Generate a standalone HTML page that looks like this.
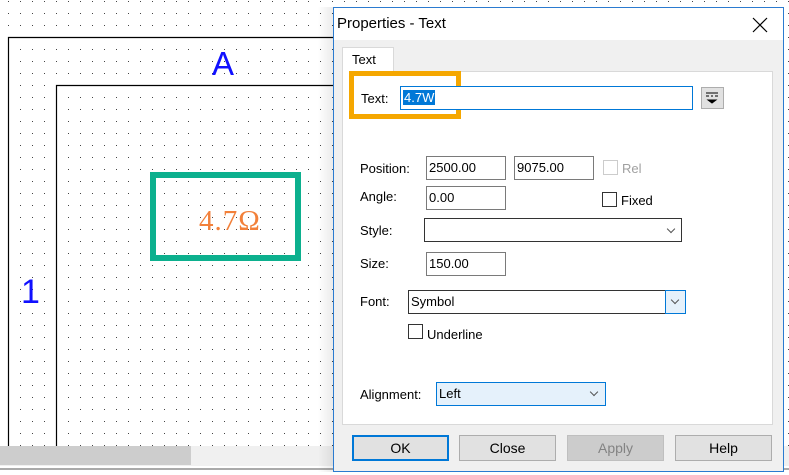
<!DOCTYPE html>
<html><head><style>
*{margin:0;padding:0;box-sizing:border-box}
body{width:789px;height:475px;position:relative;overflow:hidden;background:#fff;font-family:"Liberation Sans",sans-serif;font-size:13px;color:#000}
.a{position:absolute}
.inp{position:absolute;background:#fff;border:1px solid #7a7a7a;padding:3px 2px;font-size:13px;line-height:15px}
.lbl{position:absolute;font-size:13px}
.cb{position:absolute;width:15px;height:15px;border:1px solid #333;background:#fff}
.btn{position:absolute;top:435px;height:26px;width:97px;border:1px solid #adadad;background:#e1e1e1;text-align:center;line-height:24px;font-size:14px}
.chev{position:absolute;width:6px;height:6px;border-right:1px solid #555;border-bottom:1px solid #555;transform:rotate(45deg)}
</style></head><body>
<svg class="a" style="left:0;top:0" width="789" height="475">
<defs><pattern id="p" width="12" height="12" patternUnits="userSpaceOnUse"><rect x="8" y="1" width="1" height="1" fill="#444"/></pattern></defs>
<rect width="789" height="446" fill="url(#p)"/>
<path d="M8.5 446V37.5H340M56.5 446V85.5H340" stroke="#000" stroke-width="1.2" fill="none"/>
<text x="212" y="75" font-family="Liberation Sans" font-size="33" fill="#1010ff">A</text>
<text x="21" y="303" font-family="Liberation Sans" font-size="34" fill="#1010ff">1</text>
<rect x="153" y="175" width="145" height="83" fill="none" stroke="#0cb08e" stroke-width="6"/>
<text x="199" y="230" font-family="Liberation Serif" font-size="29" letter-spacing="1" fill="#f2803a">4.7Ω</text>
</svg>
<div class="a" style="left:0;top:446px;width:789px;height:20px;background:#f0f0f0"></div>
<div class="a" style="left:0;top:446px;width:191px;height:19px;background:#cdcdcd"></div>
<div class="a" style="left:0;top:468px;width:789px;height:2px;background:#aaa"></div>
<div class="a" style="left:318px;top:7px;width:15px;height:465px;background:linear-gradient(to right,rgba(0,0,0,0),rgba(0,0,0,0.08))"></div>
<div class="a" style="left:333px;top:7px;width:451px;height:465px;background:#f0f0f0;border:1px solid #2b7bd0">
 <div class="a" style="left:0;top:0;width:449px;height:32px;background:#fff"></div>
 <div class="a" style="left:3px;top:7px;font-size:15px">Properties - Text</div>
 <svg class="a" style="left:418px;top:9px" width="16" height="16"><path d="M1 1L15 15M15 1L1 15" stroke="#000" stroke-width="1.2"/></svg>
</div>
<div class="a" style="left:342px;top:71px;width:431px;height:354px;background:#fff;border:1px solid #d9d9d9"></div>
<div class="a" style="left:342px;top:47px;width:52px;height:25px;background:#fff;border:1px solid #d9d9d9;border-bottom:none;padding:4px 0 0 9px;font-size:13px">Text</div>
<div class="a" style="left:349px;top:71px;width:112px;height:48px;border:5px solid #f5a700"></div>
<div class="lbl" style="left:361px;top:91px">Text:</div>
<div class="inp" style="left:400px;top:86px;width:293px;height:24px;border-color:#0078d7"><span style="background:#0078d7;color:#fff;padding:0 1px">4.7W</span></div>
<div class="a" style="left:701px;top:87px;width:23px;height:22px;background:#e1e1e1;border:1px solid #adadad"></div>
<svg class="a" style="left:704px;top:90px" width="17" height="16"><path d="M2 3h12M2 6h3M7 6h2M11 6h3M4 10h8l-4 3z" stroke="#000" fill="#000" stroke-width="1"/></svg>
<div class="lbl" style="left:360px;top:161px">Position:</div>
<div class="inp" style="left:426px;top:156px;width:80px;height:24px">2500.00</div>
<div class="inp" style="left:514px;top:156px;width:80px;height:24px">9075.00</div>
<div class="cb" style="left:603px;top:160px;border-color:#ccc"></div>
<div class="lbl" style="left:622px;top:161px;color:#a0a0a0">Rel</div>
<div class="lbl" style="left:360px;top:189px">Angle:</div>
<div class="inp" style="left:426px;top:186px;width:80px;height:24px">0.00</div>
<div class="cb" style="left:602px;top:192px"></div>
<div class="lbl" style="left:621px;top:193px">Fixed</div>
<div class="lbl" style="left:360px;top:223px">Style:</div>
<div class="inp" style="left:424px;top:218px;width:258px;height:24px;border-color:#333"></div>
<div class="chev" style="left:668px;top:226px"></div>
<div class="lbl" style="left:360px;top:256px">Size:</div>
<div class="inp" style="left:426px;top:252px;width:80px;height:24px">150.00</div>
<div class="lbl" style="left:360px;top:294px">Font:</div>
<div class="inp" style="left:408px;top:290px;width:278px;height:24px;border-color:#333">Symbol</div>
<div class="a" style="left:665px;top:290px;width:21px;height:24px;background:#e5f1fb;border:1px solid #0078d7"></div>
<div class="chev" style="left:672px;top:297px"></div>
<div class="cb" style="left:408px;top:324px"></div>
<div class="lbl" style="left:427px;top:327px">Underline</div>
<div class="lbl" style="left:360px;top:387px">Alignment:</div>
<div class="inp" style="left:436px;top:382px;width:170px;height:24px;background:#e5f1fb;border-color:#0078d7">Left</div>
<div class="chev" style="left:591px;top:389px"></div>
<div class="btn" style="left:352px;border:2px solid #0078d7;line-height:22px">OK</div>
<div class="btn" style="left:459px">Close</div>
<div class="btn" style="left:567px;background:#ccc;border-color:#bfbfbf;color:#838383">Apply</div>
<div class="btn" style="left:675px">Help</div>
</body></html>
